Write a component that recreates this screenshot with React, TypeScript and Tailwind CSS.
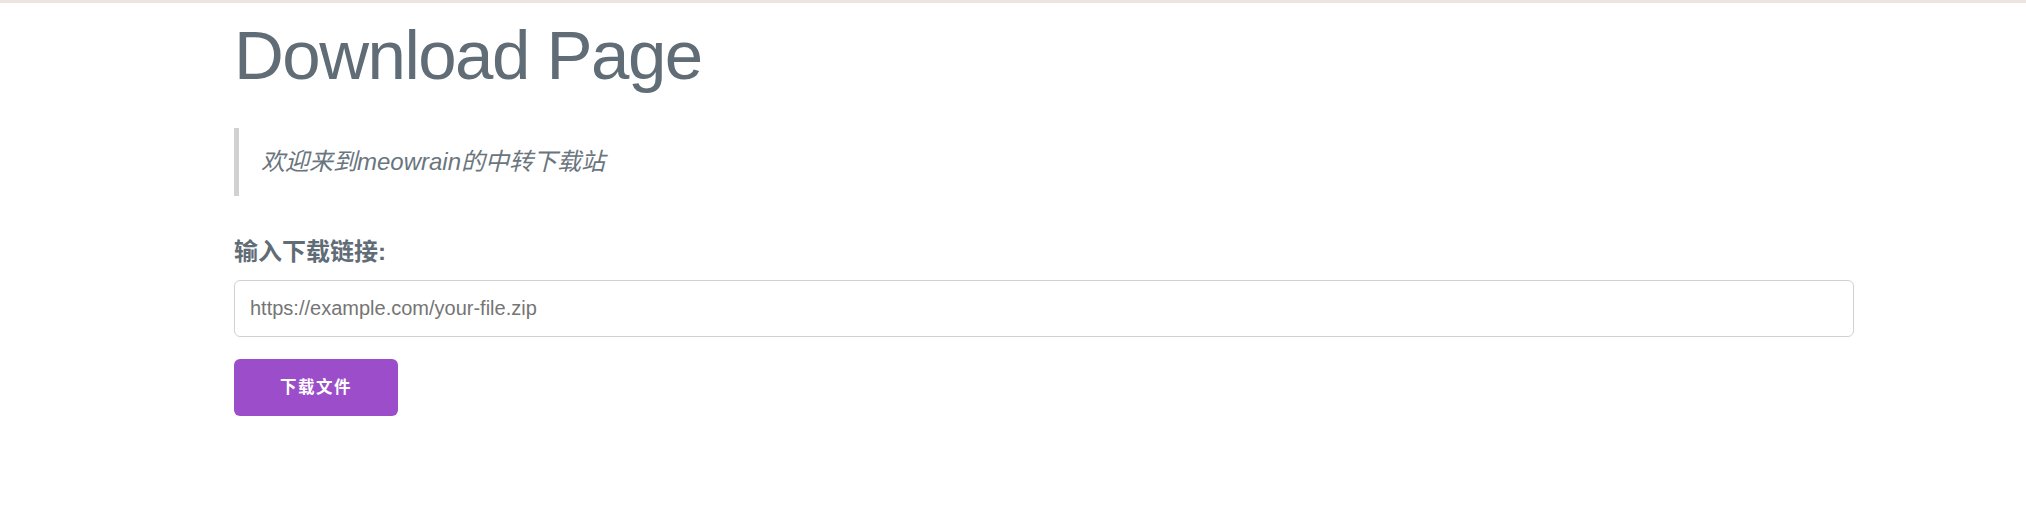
import { useState } from 'react';

const sans = 'font-["Liberation_Sans","Noto_Sans_CJK_SC",sans-serif]';

export default function App() {
  const [url, setUrl] = useState('');

  return (
    <div className={`min-h-screen bg-white text-[#606c76] ${sans}`}>
      {/* top strip */}
      <div className="h-[3px] bg-[#efe3e0]" />

      <div className="ml-[234px] w-[1620px] pt-[12px]">
        <h1 className="text-[69px] leading-[1.2] tracking-[-1.5px] font-normal mb-[30px]">
          Download Page
        </h1>

        <blockquote className="border-l-[5px] border-[#d1d1d1] py-[15px] pl-[22px] pr-[22px] mb-[37px]">
          <p className="text-[24px] leading-[1.6] italic text-[#6a757e]">
            欢迎来到meowrain的中转下载站
          </p>
        </blockquote>

        <label htmlFor="url" className="block text-[24px] leading-[1.6] font-bold mb-[8px]">
          输入下载链接:
        </label>
        <input
          id="url"
          type="text"
          value={url}
          onChange={(e) => setUrl(e.target.value)}
          placeholder="https://example.com/your-file.zip"
          className="block w-full h-[57px] px-[15px] border border-[#d1d1d1] rounded-[6px] text-[20px] text-[#606c76] placeholder:text-[#757575] outline-none mb-[22px]"
        />

        <button className="h-[57px] px-[46px] bg-[#9b4dca] rounded-[6px] text-white text-[16.5px] font-bold tracking-[1.5px]">
          下载文件
        </button>
      </div>
    </div>
  );
}
